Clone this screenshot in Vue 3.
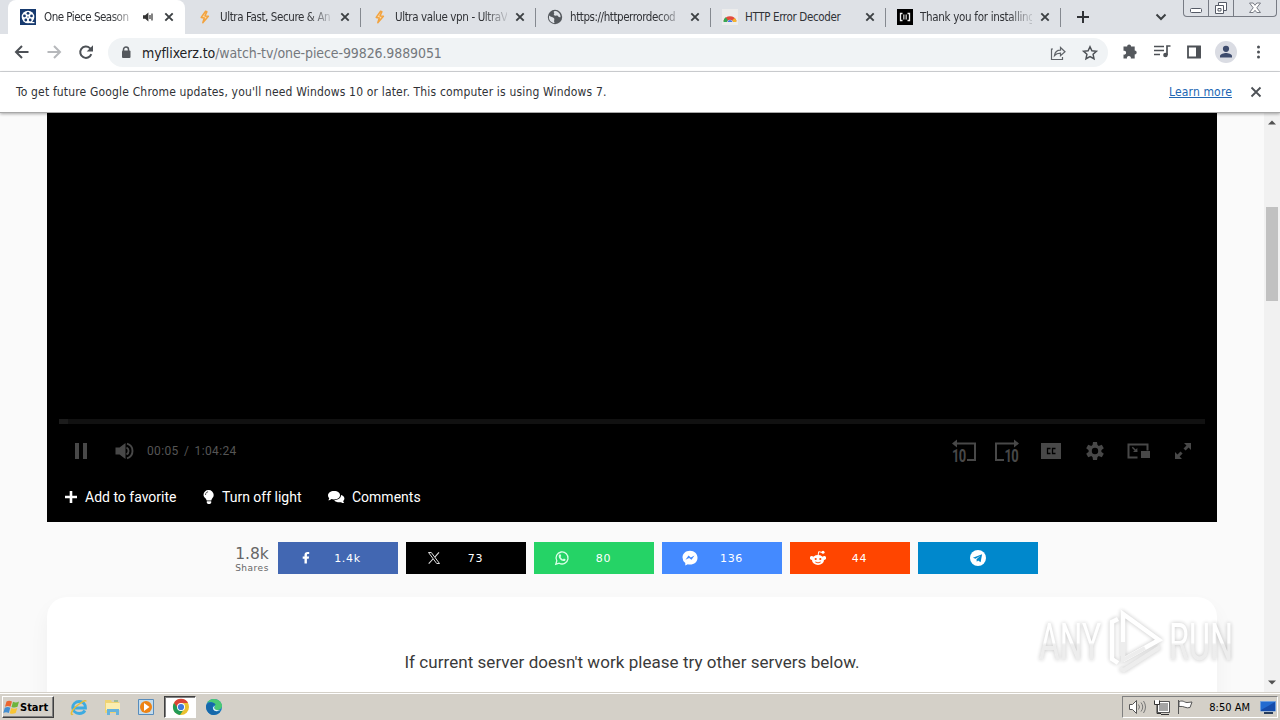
<template>
  <div class="screen">
    <header class="tab-strip">
      <div v-for="tab in tabs" :key="tab.title" class="tab" :class="{ active: tab.active }">
        <svg class="favicon" width="16" height="16" viewBox="0 0 16 16">
          <template v-if="tab.icon === 'film'">
            <rect width="16" height="16" fill="#173a6e" />
            <circle cx="8" cy="8" r="6.3" fill="#fff" />
            <g fill="#173a6e">
              <circle cx="8" cy="4.3" r="1.4" /><circle cx="11.5" cy="6.9" r="1.4" />
              <circle cx="10.2" cy="11" r="1.4" /><circle cx="5.8" cy="11" r="1.4" />
              <circle cx="4.5" cy="6.9" r="1.4" /><circle cx="8" cy="8" r=".7" />
            </g>
            <path d="M10 13.6h4.400" stroke="#fff" stroke-width="1.2" />
          </template>
          <path v-else-if="tab.icon === 'bolt'" d="M8.600 2.300 4.200 8.400l3.100.5-1.500 4.800 5.600-6.400-3.400-.4 1.900-4.200z" fill="#fbd9a8" stroke="#f2a340" stroke-width="1.500" stroke-linejoin="round" />
          <template v-else-if="tab.icon === 'globe'">
            <circle cx="8" cy="8" r="7.200" fill="#54585d" />
            <path d="M2 6.500c2 2 4 1.300 5 2.700s-.6 2 .6 4.700c-3 0-5.500-2.500-5.600-5zM7 2.200c-1 1.300 1 1.700 0 2.800s1 2 2.700 1.600 1.300 2.200 3.800 1.700c.5-3-2-6-5-6.400z" fill="#dee1e6" />
          </template>
          <template v-else-if="tab.icon === 'rainbow'">
            <rect width="16" height="16" fill="#ececec" />
            <path d="M3 12.500a5.300 5.300 0 0 1 10 0" fill="none" stroke="#e34b3d" stroke-width="3.400" />
            <path d="M1.500 13c.2-2 .8-3.500 2-4.700l2.300 2.400L5 13z" fill="#36a852" />
            <path d="M14.500 13a7 7 0 0 0-1.600-4l-2.400 2 .6 2z" fill="#f4b52c" />
            <path d="M5.500 13a2.600 2.600 0 0 1 5 0z" fill="#4777e4" />
          </template>
          <template v-else>
            <rect width="16" height="16" fill="#000" />
            <path d="M5.500 4.500h-2v7h2M10.500 4.500h2v7h-2" fill="none" stroke="#eee" stroke-width="1.300" />
            <path d="M6 5.500h4v5H6z" fill="#aaa" />
            <path d="M8 5v6" stroke="#111" />
          </template>
        </svg>
        <span class="tab-title" :class="{ faded: tab.long }" :style="{ letterSpacing: tab.spacing + 'px' }">{{ tab.title }}</span>
        <svg v-if="tab.active" class="sound" width="12" height="12" viewBox="0 0 12 12">
          <path d="M1 4.200h2.200L6.400 1.500v9L3.200 7.800H1z" fill="#333" />
          <path d="M8 4v4M10 2.500v7" stroke="#333" stroke-width="1.200" />
        </svg>
        <svg class="close" width="10" height="10" viewBox="0 0 10 10"><path d="m1.300 1.300 7.400 7.400m0-7.400L1.300 8.700" stroke="#3c4043" stroke-width="1.900" /></svg>
      </div>
      <svg class="new-tab" width="14" height="14" viewBox="0 0 14 14"><path d="M7 1v12M1 7h12" stroke="#303236" stroke-width="2" /></svg>
      <svg class="tab-search" width="12" height="8" viewBox="0 0 12 8"><path d="m1.500 1.500 4.500 4.500 4.500-4.500" fill="none" stroke="#3c4043" stroke-width="2" /></svg>
      <div class="window-buttons">
        <span><svg width="24" height="16" viewBox="0 0 24 16"><rect x="6.500" y="8.500" width="11" height="4" rx="1" fill="#fff" stroke="#555a66" /></svg></span>
        <span><svg width="24" height="16" viewBox="0 0 24 16"><path d="M9.500 2.500h8v8h-8z" fill="#fff" stroke="#555a66" /><path d="M6.500 5.500h8v8h-8z" fill="#fff" stroke="#555a66" /><path d="M9 8.500h3v2.500H9z" fill="none" stroke="#555a66" /></svg></span>
        <span><svg width="42" height="16" viewBox="0 0 42 16"><path d="M15.500 3h3.700l1.800 2.300L22.800 3h3.700l-3.700 4.800 3.700 4.700h-3.700L21 10.300l-1.800 2.200h-3.700l3.700-4.700z" fill="#fff" stroke="#777b84" /></svg></span>
      </div>
    </header>

    <div class="toolbar">
      <svg class="nav-icons" width="108" height="37" viewBox="0 0 108 37">
        <path d="M28.500 18H16.500M22 12l-6 6 6 6" fill="none" stroke="#4d5156" stroke-width="2" />
        <path d="M47.500 18h12M54 12l6 6-6 6" fill="none" stroke="#b6b8bb" stroke-width="2" />
        <path d="M91.300 20.200a5.700 5.700 0 1 1-1.400-6.100l1.700 1.700" fill="none" stroke="#4d5156" stroke-width="2" />
        <path d="M93 11.200v6.300h-6.300z" fill="#4d5156" />
      </svg>
      <div class="address">
        <svg width="10" height="13" viewBox="0 0 10 13"><path d="M2.500 5V3.500a2.500 2.500 0 0 1 5 0V5" fill="none" stroke="#54585d" stroke-width="1.500" /><rect x="1" y="4.500" width="8.500" height="7.500" rx="1" fill="#54585d" /></svg>
        <p class="url"><b>myflixerz.to</b>/watch-tv/one-piece-99826.9889051</p>
        <svg class="address-icons" width="56" height="28" viewBox="0 0 56 28">
          <path d="M6 10H4.500v10.500h11V18M7.500 16.500c.5-3.500 3-5.300 6-5.300V8.500l4.500 4.200-4.500 4v-2.500c-3 0-4.500.6-6 2.300z" fill="none" stroke="#5f6368" stroke-width="1.200" />
          <path d="m43 7.800 1.900 4 4.500.5-3.300 3 .9 4.400-4-2.200-4 2.200.9-4.400-3.300-3 4.500-.5z" fill="none" stroke="#4d5156" stroke-width="1.500" />
        </svg>
      </div>
      <svg class="action-icons" width="172" height="37" viewBox="0 0 172 37">
        <path d="M15 13h3.600a2 2 0 1 1 4 0h3.600v4a2 2 0 1 1 0 4v4h-3.900a2 2 0 1 0-3.800 0H15v-3.900a2 2 0 1 0 0-3.800z" transform="translate(.5 -.5)" fill="#54585d" />
        <path d="M46 12.500h10M46 16.500h10M46 20.500h6M59 21V12h3.500" fill="none" stroke="#4d5156" stroke-width="1.700" /><circle cx="57.500" cy="21" r="2.300" fill="#4d5156" />
        <path d="M80 12.500h12v11H80z" fill="none" stroke="#4d5156" stroke-width="1.800" /><path d="M88 12h4.800v12H88z" fill="#4d5156" />
        <circle cx="118" cy="18" r="11" fill="#dadce3" /><circle cx="118" cy="14.800" r="3.100" fill="#3e4c6d" /><path d="M112 23.500v-1.400c0-2 4-3 6-3s6 1 6 3v1.400z" fill="#3e4c6d" />
        <g fill="#4d5156"><circle cx="150.500" cy="13" r="1.500" /><circle cx="150.500" cy="18" r="1.500" /><circle cx="150.500" cy="23" r="1.500" /></g>
      </svg>
    </div>

    <div class="infobar">
      <span class="notice">To get future Google Chrome updates, you'll need Windows 10 or later. This computer is using Windows 7.</span>
      <a>Learn more</a>
      <svg width="12" height="12" viewBox="0 0 12 12"><path d="m1.500 1.500 9 9m0-9-9 9" stroke="#4d5156" stroke-width="1.800" /></svg>
    </div>

    <div class="viewport">
      <main>
        <section class="player">
          <div class="progress"><i></i></div>
          <div class="controls">
            <svg width="65" height="24" viewBox="0 0 65 24">
              <path d="M4 4h4v16H4zM12 4h4v16h-4z" fill="#484848" />
              <path d="M44.500 8.500h4l6-4.500v16l-6-4.500h-4z" fill="#484848" /><path d="M55.500 8.500a4 4 0 0 1 0 7M56 4.700a7.600 7.600 0 0 1 0 14.600" fill="none" stroke="#484848" stroke-width="1.900" />
            </svg>
            <span class="time">00:05 / 1:04:24</span>
            <svg class="right-controls" width="250" height="30" viewBox="0 0 250 30">
              <g fill="none" stroke="#484848" stroke-width="2">
                <path d="M7 7.500h18V24h-8M66 7.500H46V24h8" />
                <path d="M187.500 21.500h-9v-13h19v6" />
              </g>
              <path d="m2 7.500 5-4v8zM69 7.500l-5-4v8z" fill="#484848" />
              <text x="2" y="26" class="ten">10</text><text x="54.500" y="26" class="ten">10</text>
              <path d="M91 7h20v16H91z" fill="#484848" /><path d="M100.500 12.500h-3v5h3M105.500 12.500h-3v5h3" fill="none" stroke="#000" stroke-width="1.300" />
              <g transform="translate(145 15)">
                <path v-for="n in 6" :key="n" d="M-2-9h4l.6 4h-5.200z" :transform="`rotate(${n * 60})`" fill="#484848" />
                <circle r="4.800" fill="none" stroke="#484848" stroke-width="3.200" />
              </g>
              <path d="M191 15h9v7h-9zM187.500 16H183l1.600-1.500-2.800-2.800 1-1 2.800 2.800 1.700-1.600z" fill="#484848" />
              <path d="M234 7h7v7l-2.400-2.400-3 3-2.100-2.100 3-3zM225 23h7l-2.400-2.400 3-3-2.100-2.100-3 3L225 16z" fill="#484848" />
            </svg>
          </div>
          <div class="actions">
            <span><svg width="20" height="16" viewBox="0 0 20 16"><path d="M6 2v12M0 8h12" stroke="#fff" stroke-width="2.600" /></svg>Add to favorite</span>
            <span class="light"><svg width="19" height="16" viewBox="0 0 19 16"><path d="M5.500 1a5 5 0 0 1 5.200 5c0 2.700-2 3-2.400 5.500H3.700C3.300 9 .5 8.500.5 6a5 5 0 0 1 5-5zM3.800 12.300h4.400V14L7 15H5l-1.200-1z" fill="#fff" /><path d="M2.500 6c0-2 1-3 2.600-3.200" fill="none" stroke="#555" /></svg>Turn off light</span>
            <span class="comments"><svg width="24" height="16" viewBox="0 0 24 16"><path d="M6 2c4 0 6 1.900 6 4.300s-2.500 4.200-6 4.200c-1 0-2-.2-2.500-.4C2.500 11 1.500 11.300.2 11.300c.7-.7 1-1.500 1-2C.5 8.500 0 7.500 0 6.300 0 4 2.500 2 6 2z" fill="#fff" /><path d="M13 6c2 .5 3.400 1.700 3.400 3.600 0 1-.5 1.800-1.200 2.500 0 .6.400 1.400 1 2-1.400 0-2.300-.3-3-.9-3 .5-5.900-.3-7-2C10 11 13 9.300 13 6z" fill="#fff" /></svg>Comments</span>
          </div>
        </section>

        <section class="shares">
          <div class="total"><strong>1.8k</strong><small>Shares</small></div>
          <div v-for="s in shares" :key="s.name" class="share" :class="s.name">
            <svg width="16" height="16" viewBox="0 0 16 16">
              <path v-if="s.name === 'facebook'" d="M6.500 13.500V8.800H4.700V6.500h1.800V5c0-2 1.100-3 3-3h1.700v2.100H10c-.8 0-1.100.4-1.100 1.100v1.300h2.200l-.4 2.300H8.900v4.700z" fill="#fff" />
              <template v-else-if="s.name === 'x'"><path d="M2.500 2.500h2.800l8.200 11h-2.800z" fill="none" stroke="#ddd" /><path d="M13 2.300 8.800 7.200M7 9l-4.300 4.700" stroke="#ddd" stroke-width="1.100" /></template>
              <template v-else-if="s.name === 'whatsapp'"><path d="m1.800 14.200 1-3.400a6 6 0 1 1 2.400 2.400z" fill="none" stroke="#d9ffe7" stroke-width="1.300" /><path d="M5.500 4.500c.5-.3 1-.2 1.200.3l.5 1.300-.7.900c.6 1.200 1.400 1.900 2.500 2.400l.9-1 1.600.8c.2 1.300-1 2-2 1.900C7 10.700 4.700 8.400 4.700 6c0-.7.300-1.200.8-1.500z" fill="#d9ffe7" /></template>
              <template v-else-if="s.name === 'messenger'"><path d="M8 .7c4.400 0 7.500 3 7.500 7s-3.100 6.800-7.500 6.800c-.8 0-1.500-.1-2.200-.3L3.300 15.500v-2.600A6.700 6.700 0 0 1 .5 7.500C.5 3.600 3.600.7 8 .7z" fill="#fff" /><path d="m3.500 9.800 3-4.200 2.300 1.800 3.700-1.900-3 4.200-2.400-1.800z" fill="#448aff" /></template>
              <template v-else-if="s.name === 'reddit'"><ellipse cx="8" cy="10" rx="6" ry="5" fill="#fff" /><circle cx="1.800" cy="8" r="1.900" fill="#fff" /><circle cx="14.200" cy="8" r="1.900" fill="#fff" /><path d="m8 6 .7-4.300 3.800.8" fill="none" stroke="#fff" stroke-width="1" /><circle cx="13" cy="2.300" r="1.500" fill="#fff" /><circle cx="5.700" cy="9" r="1.100" fill="#ff4500" /><circle cx="10.300" cy="9" r="1.100" fill="#ff4500" /><path d="M5.300 12q2.700 1.700 5.400 0" fill="none" stroke="#ff4500" stroke-width=".9" /></template>
              <template v-else><circle cx="8" cy="8" r="8" fill="#fff" /><path d="m2.900 7.800 9.200-3.600-1.500 8-2.500-1.800-1.300 1.300-.3-2.500 3.900-3.500-4.900 3.100z" fill="#0088cc" /></template>
            </svg>
            <span v-if="s.count">{{ s.count }}</span>
          </div>
        </section>

        <section class="server-card">If current server doesn't work please try other servers below.</section>
      </main>

      <aside class="scrollbar">
        <svg width="8" height="5" viewBox="0 0 8 5"><path d="m0 4.500 4-4 4 4z" fill="#505050" /></svg>
        <i></i>
        <svg width="8" height="5" viewBox="0 0 8 5"><path d="m0 .5 4 4 4-4z" fill="#505050" /></svg>
      </aside>

      <svg class="watermark" width="210" height="80" viewBox="0 0 210 80">
        <defs>
          <linearGradient id="fade" x1="0" y1="0" x2="0" y2="1">
            <stop offset=".5" stop-color="#fff" /><stop offset=".54" stop-color="#ececec" />
          </linearGradient>
        </defs>
        <g class="mark">
          <text x="8" y="58" textLength="62" lengthAdjust="spacingAndGlyphs">ANY</text>
          <text x="138" y="58" textLength="64" lengthAdjust="spacingAndGlyphs">RUN</text>
          <path d="M87 17l-6 3v37l6 4M92 54V12l36 26-36 20" fill="none" stroke="#fff" stroke-width="4.500" />
          <path d="M92 40v18l22-12M89 67l4 1 36-23" fill="none" stroke="#ececec" stroke-width="4" />
        </g>
      </svg>
    </div>

    <footer class="taskbar">
      <button class="start">
        <svg width="17" height="18" viewBox="0 0 17 18"><path d="M3.500 3.500Q6 1.800 9 3.500L7.500 8.700Q5 7.500 2 8.700z" fill="#eb6630" /><path d="M10 3.800q3 1.500 6-.3l-1.500 5.300q-3 1.500-6 .2z" fill="#6db43b" /><path d="M1.800 9.700q3-1.200 5.500 0L5.800 15Q3 13.500.3 15z" fill="#438ed1" /><path d="M8.300 10q3 1.500 6-.1L12.700 15q-3 1.500-6 .3z" fill="#f8c534" /></svg>
        Start
      </button>
      <svg class="quick" width="32" height="22" viewBox="0 0 32 22">
        <path d="M9.500 12h13c0-4-2.500-6.500-6.300-6.500-4 0-6.500 3-6.500 6s2.500 6 6.500 6c2.800 0 4.700-1.100 5.700-3" fill="none" stroke="#3dabe1" stroke-width="2.800" />
        <path d="M10 18c-3 2-2-3 2.500-7S23 3 23 5.500" fill="none" stroke="#e6bd38" stroke-width="1.500" />
      </svg>
      <svg class="quick" width="34" height="22" viewBox="0 0 34 22">
        <path d="M10 4h6l1 2h7v11H10z" fill="#efd373" /><path d="M11 7h14v7H11z" fill="#fbedaf" /><path d="M12 19v-6h12v6h-3v-3h-6v3z" fill="#66b3dc" /><path d="M19 5h4" stroke="#69a968" />
      </svg>
      <svg class="quick" width="34" height="22" viewBox="0 0 34 22">
        <path d="M9.500 3.500h15v15h-15z" fill="#c4dcec" stroke="#578cbc" /><circle cx="17" cy="11" r="6" fill="#ee8313" /><path d="m15 7 5.500 4-5.500 4z" fill="#fff" />
      </svg>
      <div class="running">
        <svg width="18" height="18" viewBox="0 0 18 18"><circle cx="9" cy="9" r="8" fill="#eac12f" /><path d="M2 5a8 8 0 0 1 14 0H9L5.500 11z" fill="#db4437" /><path d="M2 5a8 8 0 0 0 6 12l4-6-3.500.8-3-2z" fill="#239b56" /><circle cx="9" cy="9" r="4" fill="#fff" /><circle cx="9" cy="9" r="3.100" fill="#3f79dc" /></svg>
      </div>
      <svg class="quick" width="34" height="22" viewBox="0 0 34 22">
        <circle cx="17" cy="11" r="8" fill="#187cc4" /><path d="M10 7c3-6 13-5 15 2 .4 3-2 5-5 5s-3-2-2-3.500C18 6 12.500 5 10 7z" fill="#4bc974" /><path d="M9 10c1-4 8-5 10-1-4-1-5 4-1 6 2 .8 4 .6 5.500-.4C22 19 16 20 13 18s-4-5-4-8z" fill="#1668aa" /><path d="M18 10c-2 2 0 5 5 4-2 2-7 1.500-7-2 0-1 .8-1.800 2-2z" fill="#e5f4f4" />
      </svg>
      <div class="tray">
        <svg width="72" height="20" viewBox="0 0 72 20">
          <path d="M6.500 7.500h3l4-4v13l-4-4h-3z" fill="#fff" stroke="#555" /><path d="M15.500 7.500q2 2.500 0 5M18 5.500q3.500 4.500 0 9M20.500 4q4 6 0 12" fill="none" stroke="#777" />
          <path d="M35.500 5.500h10v9h-10z" fill="#a4a4a4" stroke="#fff" /><path d="M34.500 4.500h12v11h-12z" fill="none" stroke="#555" /><path d="M38 17.500h8" stroke="#333" /><path d="M31.500 3.500v4h5v-4M34 8v8.500h4" fill="none" stroke="#333" /><path d="M32 3h4v4h-4z" fill="#fff" />
          <path d="M55.500 17V3M56 4.500c5-1.500 5 1 8 1l5-.5-2 5.500c-4 1.500-6-2-11-1z" fill="#fff" stroke="#555" />
        </svg>
        <span>8:50 AM</span>
        <svg width="16" height="16" viewBox="0 0 16 16"><path d="M.5 2.500h15v9.500H.5z" fill="#236bd0" stroke="#6e9edc" /><path d="m1 11 14-8v9H1z" fill="#164caa" /><path d="M4 14h9" stroke="#273c5b" stroke-width="2" /></svg>
      </div>
    </footer>
  </div>
</template>

<script setup>
const tabs = [
  { title: 'One Piece Season', icon: 'film', active: true, long: true, spacing: -0.5 },
  { title: 'Ultra Fast, Secure & An', icon: 'bolt', long: true, spacing: -0.4 },
  { title: 'Ultra value vpn - UltraV', icon: 'bolt', long: true, spacing: -0.38 },
  { title: 'https://httperrordecod', icon: 'globe', long: true, spacing: -0.43 },
  { title: 'HTTP Error Decoder', icon: 'rainbow', spacing: -0.35 },
  { title: 'Thank you for installing', icon: 'brackets', long: true, spacing: -0.3 },
];

const shares = [
  { name: 'facebook', count: '1.4k' },
  { name: 'x', count: '73' },
  { name: 'whatsapp', count: '80' },
  { name: 'messenger', count: '136' },
  { name: 'reddit', count: '44' },
  { name: 'telegram' },
];
</script>

<style>
  body { margin: 0; overflow: hidden; }
</style>

<style scoped>
  .screen {
    width: 1280px;
    height: 720px;
    display: flex;
    flex-direction: column;
    overflow: hidden;
    background: #fff;
    font: 12px "DejaVu Sans Condensed", "DejaVu Sans", sans-serif;
    font-stretch: condensed;
    color: #303236;
  }
  svg { display: block; flex: none; }
  .tab-strip {
    height: 34px;
    flex: none;
    display: flex;
    padding-left: 8px;
    background: #dee1e6;
  }
  .tab {
    position: relative;
    box-sizing: border-box;
    width: 175px;
    height: 34px;
    flex: none;
    display: flex;
    align-items: center;
    padding: 0 10px 0 12px;
  }
  .tab::after {
    content: "";
    position: absolute;
    right: -1px;
    top: 8px;
    width: 1px;
    height: 19px;
    background: #858990;
  }
  .tab.active {
    width: 177px;
    padding-right: 11px;
    background: #fff;
    border-radius: 8px 8px 0 0;
  }
  .tab.active::after { display: none; }
  .tab-title {
    flex: 1;
    min-width: 0;
    margin: 0 8px 0 7px;
    white-space: nowrap;
    font-size: 11.5px;
  }
  .tab-title.faded { -webkit-mask-image: linear-gradient(90deg, #000 88px, #0003 110px); }
  .tab.active .tab-title {
    flex: none;
    width: 86px;
    margin: 0 0 0 8px;
    -webkit-mask-image: linear-gradient(90deg, #000 66px, #0005 86px);
  }
  .sound { margin: 0 10px 0 12px; }
  .tab .close { margin-left: auto; }
  .new-tab { margin: 10px 0 0 16px; }
  .tab-search { margin: 13px 0 0 65px; }
  .window-buttons {
    display: flex;
    height: 16px;
    margin-left: 16px;
    border: 1px solid #777b84;
    border-top: 0;
    border-radius: 0 0 4px 4px;
  }
  .window-buttons span + span { border-left: 1px solid #777b84; }
  .toolbar {
    height: 37px;
    flex: none;
    display: flex;
    border-bottom: 1px solid #d4d6d9;
  }
  .address {
    width: 1000px;
    height: 29px;
    box-sizing: border-box;
    margin-top: 4px;
    padding-left: 13px;
    display: flex;
    align-items: center;
    border-radius: 15px;
    background: #f0f3f5;
  }
  .url {
    margin: 0 0 0 11px;
    font-size: 14px;
    letter-spacing: -.1px;
    color: #74787d;
    white-space: nowrap;
  }
  .url b { font-weight: 400; color: #202124; }
  .address-icons { margin-left: auto; margin-right: 5px; }
  .infobar {
    position: relative;
    z-index: 2;
    height: 40px;
    flex: none;
    display: flex;
    align-items: center;
    padding: 0 18px 0 16px;
    background: #fff;
    border-bottom: 1px solid #a8a8a8;
    box-shadow: 0 1px 3px #0005;
  }
  .notice { white-space: nowrap; letter-spacing: .165px; }
  .infobar a {
    margin-left: auto;
    margin-right: 18px;
    letter-spacing: .15px;
    color: #2066b3;
    text-decoration: underline;
  }
  .viewport {
    position: relative;
    height: 579px;
    flex: none;
    display: flex;
    background: #fafafa;
    overflow: hidden;
  }
  main {
    width: 1170px;
    margin: 0 47px;
    flex: none;
  }
  .player {
    box-sizing: border-box;
    height: 409px;
    padding: 306px 12px 0;
    background: #000;
  }
  .progress { height: 5px; background: #111; }
  .progress i { display: block; width: 9px; height: 5px; background: #1c1c1c; }
  .controls {
    height: 54px;
    display: flex;
    align-items: center;
    padding: 0 0 0 12px;
  }
  .time {
    margin-left: 11px;
    font: 12px Roboto, sans-serif;
    letter-spacing: .35px;
    word-spacing: 2px;
    color: #555;
  }
  .controls .right-controls { margin-left: auto; margin-right: 5px; }
  .ten {
    font: 700 18px Roboto, sans-serif;
    fill: #484848;
    letter-spacing: -.8px;
    transform-box: fill-box;
    transform: scaleX(.72);
  }
  .actions {
    display: flex;
    padding: 5px 0 0 6px;
    font: 14px/28px Roboto, sans-serif;
    color: #fff;
  }
  .actions span { display: flex; align-items: center; width: 138px; }
  .actions .light { width: 125px; }
  .shares {
    height: 32px;
    margin-top: 20px;
    display: flex;
    gap: 8px;
  }
  .total {
    width: 36px;
    margin-left: 187px;
    text-align: center;
    font-family: "DejaVu Sans", sans-serif;
    font-stretch: normal;
    color: #666;
  }
  .total strong { display: block; font-size: 15.5px; line-height: 25px; font-weight: 400; }
  .total small { display: block; font-size: 9px; line-height: 3px; letter-spacing: .5px; }
  .share {
    box-sizing: border-box;
    width: 120px;
    height: 32px;
    display: flex;
    align-items: center;
    padding-left: 20px;
    color: #fff;
    font: 11px "DejaVu Sans", sans-serif;
    letter-spacing: .7px;
  }
  .share span { width: 67px; text-align: center; }
  .facebook { background: #4267b2; }
  .x { background: #000; }
  .whatsapp { background: #25d366; }
  .messenger { background: #448aff; }
  .reddit { background: #ff4500; }
  .telegram { background: #08c; padding: 0; justify-content: center; }
  .server-card {
    height: 130px;
    margin-top: 23px;
    border-radius: 20px;
    background: #fff;
    box-shadow: 0 10px 20px #0000000c;
    color: #3a3a3a;
    text-align: center;
    font: 17px/130px Roboto, sans-serif;
    letter-spacing: .045px;
  }
  .scrollbar {
    width: 16px;
    flex: none;
    display: flex;
    flex-direction: column;
    align-items: center;
    box-sizing: border-box;
    padding: 7px 0;
    background: #f1f1f1;
  }
  .scrollbar i { width: 12px; height: 94px; margin-top: 82px; background: #c1c1c1; }
  .scrollbar svg:last-child { margin-top: auto; }
  .watermark { position: absolute; left: 1031px; top: 489px; }
  .mark { filter: drop-shadow(0 0 2px #0004); opacity: .9; }
  .mark text { font: 400 51px Roboto, sans-serif; fill: url(#fade); }
  .taskbar {
    box-sizing: border-box;
    height: 28px;
    flex: none;
    display: flex;
    align-items: flex-start;
    padding: 3px 2px 0;
    border-top: 1px solid #d4d0c8;
    box-shadow: inset 0 1px #fff;
    background: #d4d0c8;
  }
  .start {
    box-sizing: border-box;
    width: 52px;
    height: 22px;
    padding: 0;
    display: flex;
    align-items: center;
    border: 1px solid;
    border-color: #fff #404040 #404040 #fff;
    box-shadow: inset -1px -1px #808080;
    background: #d4d0c8;
    color: #000;
    font: 700 11px "DejaVu Sans Condensed", "DejaVu Sans", sans-serif;
    font-stretch: condensed;
  }
  .start + .quick { margin-left: 9px; }
  .running {
    box-sizing: border-box;
    width: 32px;
    height: 22px;
    margin: 0 1px;
    display: flex;
    justify-content: center;
    align-items: center;
    border: 1px solid;
    border-color: #404040 #fff #fff #404040;
    box-shadow: inset 1px 1px #808080;
    background: #fff;
  }
  .running svg { margin-left: 2px; }
  .tray {
    box-sizing: border-box;
    width: 156px;
    height: 22px;
    margin-left: auto;
    display: flex;
    align-items: center;
    border: 1px solid;
    border-color: #808080 #fff #fff #808080;
    color: #000;
    font-size: 11px;
  }
  .tray span {
    box-sizing: border-box;
    width: 65px;
    padding-right: 10px;
    text-align: right;
    white-space: nowrap;
  }
</style>
